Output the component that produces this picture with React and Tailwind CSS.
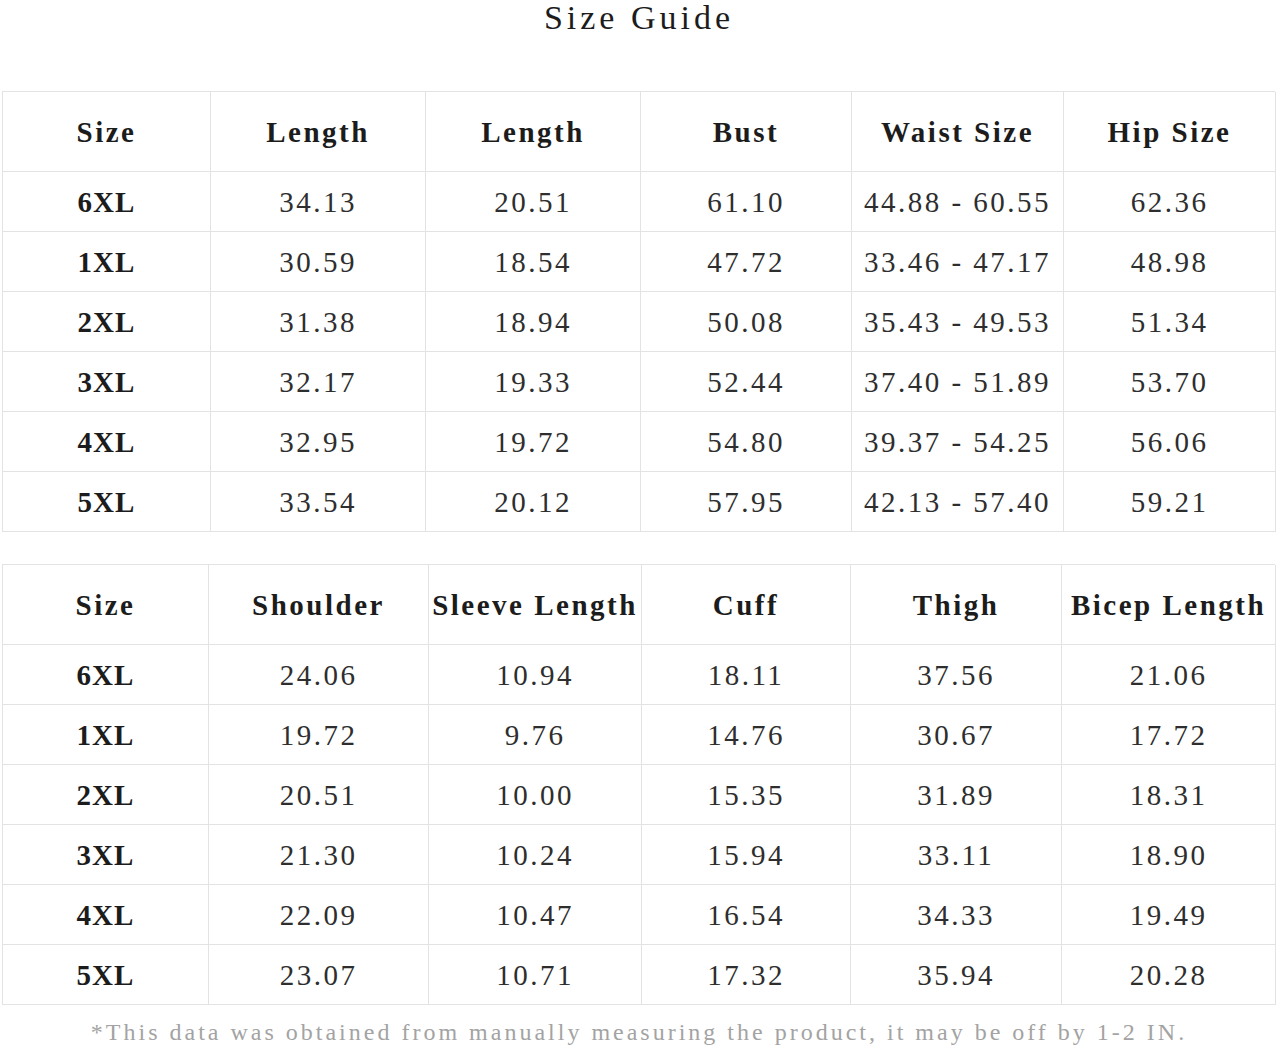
const table1 = {
  cols: "grid-cols-[208px_215px_215px_211px_212px_212px]",
  head: ["Size", "Length", "Length", "Bust", "Waist Size", "Hip Size"],
  rows: [
    ["6XL", "34.13", "20.51", "61.10", "44.88 - 60.55", "62.36"],
    ["1XL", "30.59", "18.54", "47.72", "33.46 - 47.17", "48.98"],
    ["2XL", "31.38", "18.94", "50.08", "35.43 - 49.53", "51.34"],
    ["3XL", "32.17", "19.33", "52.44", "37.40 - 51.89", "53.70"],
    ["4XL", "32.95", "19.72", "54.80", "39.37 - 54.25", "56.06"],
    ["5XL", "33.54", "20.12", "57.95", "42.13 - 57.40", "59.21"],
  ],
}

const table2 = {
  cols: "grid-cols-[206px_220px_213px_209px_211px_214px]",
  head: ["Size", "Shoulder", "Sleeve Length", "Cuff", "Thigh", "Bicep Length"],
  rows: [
    ["6XL", "24.06", "10.94", "18.11", "37.56", "21.06"],
    ["1XL", "19.72", "9.76", "14.76", "30.67", "17.72"],
    ["2XL", "20.51", "10.00", "15.35", "31.89", "18.31"],
    ["3XL", "21.30", "10.24", "15.94", "33.11", "18.90"],
    ["4XL", "22.09", "10.47", "16.54", "34.33", "19.49"],
    ["5XL", "23.07", "10.71", "17.32", "35.94", "20.28"],
  ],
}

function SizeTable({ data }) {
  return (
    <div className={`grid ${data.cols} w-[1273px] ml-[2px] border-l border-t border-[#e3e3e3]`}>
      {data.head.map((h, i) => (
        <div
          key={"h" + i}
          className="h-[80px] pt-[3px] flex items-center justify-center border-r border-b border-[#e3e3e3] text-[29px] font-bold tracking-[2.5px] text-[#1c1c1c] whitespace-nowrap"
        >
          {h}
        </div>
      ))}
      {data.rows.map((row, r) =>
        row.map((v, i) => (
          <div
            key={r + "-" + i}
            className={
              "h-[60px] pt-[3px] flex items-center justify-center border-r border-b border-[#e3e3e3] text-[29px] whitespace-nowrap " +
              (i === 0
                ? "font-bold tracking-[1px] text-[#1c1c1c]"
                : "tracking-[2.5px] text-[#2e2e2e]")
            }
          >
            {v.replace(" - ", "  -  ")}
          </div>
        ))
      )}
    </div>
  )
}

export default function App() {
  return (
    <div className="w-[1278px] h-[1045px] bg-white font-['Liberation_Serif',serif] overflow-hidden">
      <div className="h-[34px] flex items-center justify-center text-[34px] tracking-[4px] text-[#1c1c1c]">
        Size Guide
      </div>
      <div className="h-[57px]" />
      <SizeTable data={table1} />
      <div className="h-[32px]" />
      <SizeTable data={table2} />
      <div className="h-[54px] flex items-center justify-center text-[24px] tracking-[3px] text-[#a3a3a3] whitespace-pre">
        *This data was obtained from manually measuring the product, it may be off by 1-2 IN.
      </div>
    </div>
  )
}
